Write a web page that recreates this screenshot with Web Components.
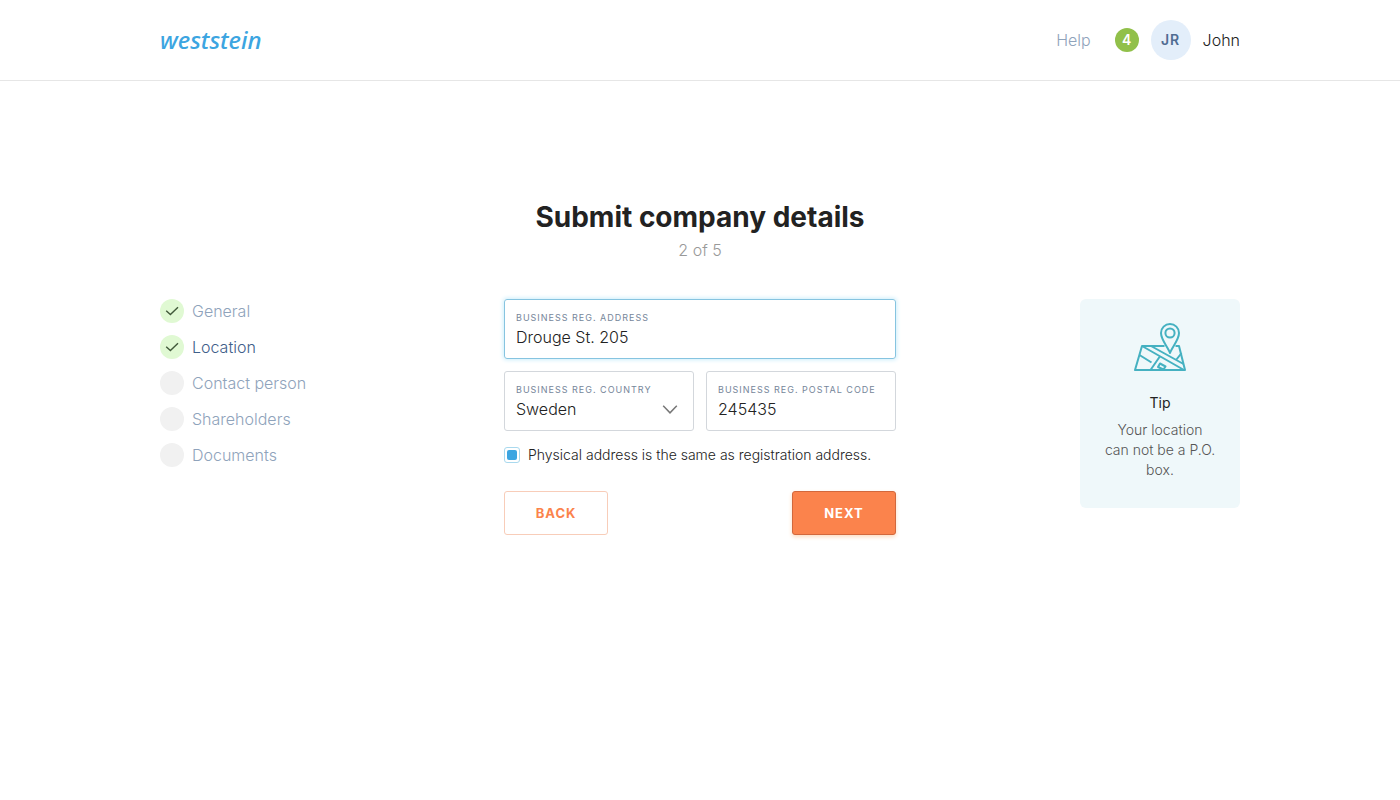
<!DOCTYPE html>
<html lang="en">
<head>
<meta charset="utf-8">
<meta name="viewport" content="width=device-width, initial-scale=1">
<title>Weststein – Submit company details</title>
<style>
  body {
    margin: 0;
    background: #fff;
    color: #222;
    font: 300 16px/24px Inter, "Open Sans", sans-serif;
    --blue: #3ca5e1;
    --muted: #8fa3bb;
    --navy: #3f608a;
    --orange: #fb834c;
  }
</style>
</head>
<body>
<company-page></company-page>

<script>
const define = (name, html, setup) => {
  const template = document.createElement('template');
  template.innerHTML = html;
  customElements.define(name, class extends HTMLElement {
    constructor() {
      super();
      this.attachShadow({ mode: 'open' }).append(template.content.cloneNode(true));
    }
    connectedCallback() {
      if (setup) setup(this, this.shadowRoot);
    }
  });
};

define('site-header', `
  <style>
    :host { display: block; border-bottom: 1px solid #e6e6e6; }
    header {
      max-width: 1080px; height: 80px; margin: 0 auto; padding: 0 16px;
      display: flex; align-items: center; justify-content: space-between;
    }
    a { text-decoration: none; }
    .logo { color: var(--blue); font: italic 500 24px/32px "Noto Sans", sans-serif; }
    nav { display: flex; align-items: center; gap: 12px; }
    .help { color: var(--muted); margin-right: 12px; }
    .count, .avatar {
      display: grid; place-items: center; border-radius: 50%;
      font-size: 14px; font-weight: 600;
    }
    .count { width: 24px; height: 24px; background: #91c04a; color: #fff; }
    .avatar { width: 40px; height: 40px; background: #e3eefa; color: #506c92; letter-spacing: 1px; }
    .name { color: #222; }
  </style>
  <header>
    <a class="logo" href="#">weststein</a>
    <nav>
      <a class="help" href="#">Help</a>
      <span class="count">4</span>
      <span class="avatar">JR</span>
      <a class="name" href="#">John</a>
    </nav>
  </header>
`);

define('step-item', `
  <style>
    :host { display: flex; align-items: center; gap: 8px; color: var(--muted); }
    :host([current]) { color: var(--navy); }
    .dot { width: 24px; height: 24px; border-radius: 50%; background: #f1f1f1; }
    :host([done]) .dot { background: #e0f9d3; }
    svg { display: none; fill: none; stroke: #41593a; stroke-width: 1.4; }
    :host([done]) svg { display: block; }
    a { color: inherit; text-decoration: none; }
  </style>
  <span class="dot"><svg width="24" height="24" viewBox="0 0 24 24"><path d="M6.2 11.8 10.4 15.6 18 8.3"/></svg></span>
  <a href="#"><slot></slot></a>
`);

define('step-list', `
  <style>
    :host { display: block; }
    nav { display: grid; gap: 12px; }
  </style>
  <nav aria-label="Steps"><slot></slot></nav>
`);

const fieldStyle = `
  :host {
    display: block; box-sizing: border-box; min-width: 0; padding: 10px 11px;
    border: 1px solid #d3d7dc; border-radius: 3px;
  }
  :host([active]) { border-color: #86c4e0; box-shadow: 0 0 4px 1px #cdeefb; }
  label {
    display: block; color: #76869a; font-size: 9px; line-height: 16px;
    font-weight: 400; letter-spacing: 1px; text-transform: uppercase;
  }
  input, select {
    display: block; box-sizing: border-box; width: 100%; height: 22px; margin: 0; padding: 0;
    border: 0; outline: 0; background: none; appearance: none;
    color: #222; font: inherit; line-height: 22px;
  }
`;

define('text-field', `
  <style>${fieldStyle}</style>
  <label for="control"></label>
  <input id="control" type="text">
`, (host, root) => {
  root.querySelector('label').textContent = host.getAttribute('label');
  root.querySelector('input').value = host.getAttribute('value');
});

define('select-field', `
  <style>
    ${fieldStyle}
    .box { display: grid; align-items: center; }
    select, svg { grid-area: 1 / 1; }
    svg { justify-self: end; margin-right: 4px; pointer-events: none; fill: none; stroke: #777; stroke-width: 1.5; }
  </style>
  <label for="control"></label>
  <div class="box">
    <select id="control"></select>
    <svg width="16" height="10" viewBox="0 0 16 10"><path d="M1.2 1.8 8 8.8 14.8 1.8"/></svg>
  </div>
`, (host, root) => {
  root.querySelector('label').textContent = host.getAttribute('label');
  root.querySelector('select').replaceChildren(
    ...host.getAttribute('options').split(',').map(text => new Option(text)));
});

define('check-field', `
  <style>
    :host { display: block; }
    label { display: flex; align-items: center; gap: 8px; font-size: 14px; line-height: 24px; }
    input {
      appearance: none; flex: none; box-sizing: border-box; width: 16px; height: 16px;
      margin: 0; padding: 2px; border: 1px solid #a9d9ee; border-radius: 3px;
      display: grid;
    }
    input:checked::before { content: ""; background: var(--blue); border-radius: 2px; }
  </style>
  <label><input type="checkbox" checked><span><slot></slot></span></label>
`);

define('action-button', `
  <style>
    :host { display: block; width: 104px; }
    button {
      width: 100%; height: 44px; padding: 0; border: 1px solid #f8cdb9; border-radius: 3px;
      background: #fff; color: var(--orange); cursor: pointer;
      font: inherit; font-size: 13px; font-weight: 700; letter-spacing: 1px;
    }
    :host([primary]) button {
      background: var(--orange); border-color: #d2683c; color: #fff;
      box-shadow: 0 2px 4px #fddcc0;
    }
  </style>
  <button type="button"><slot></slot></button>
`);

define('tip-card', `
  <style>
    :host {
      display: block; box-sizing: border-box; width: 160px; padding: 24px 20px 28px;
      border-radius: 6px; background: #eff8fa; text-align: center;
      color: #555; font-size: 14px; line-height: 20px;
    }
    svg { display: block; margin: 0 auto 20px; fill: none; stroke: #45b1c1; stroke-width: 2; stroke-linejoin: round; }
    h2 { margin: 0 0 5px; font-size: 14px; line-height: 24px; font-weight: 400; color: #222; }
    p { margin: 0; }
  </style>
  <svg width="52" height="48" viewBox="0 0 52 48" aria-hidden="true">
    <path d="M30.5 23H8L1 47H51L45 23H41.5"/>
    <path d="M36 30C34 24 27 17 27 10A9 9 0 0 1 45 10C45 17 38 24 36 30Z"/>
    <circle cx="36" cy="10" r="4.6"/>
    <path d="M8 23 50 47M17 23 49.5 41M5.5 32 17.5 39.5M25.5 34 16.5 47M42.5 36.5 47.5 30M26 40.5 31.5 43.5 29.5 46.5 24 44Z"/>
  </svg>
  <h2>Tip</h2>
  <p><slot></slot></p>
`);

define('company-form', `
  <style>
    :host { display: block; }
    form { display: grid; gap: 12px; }
    .pair { display: grid; grid-template-columns: 1fr 1fr; gap: 12px; }
    .actions { display: flex; justify-content: space-between; margin-top: 12px; }
  </style>
  <form>
    <text-field label="Business reg. address" value="Drouge St. 205" active></text-field>
    <div class="pair">
      <select-field label="Business reg. country" options="Sweden,Norway,Denmark"></select-field>
      <text-field label="Business reg. postal code" value="245435"></text-field>
    </div>
    <check-field>Physical address is the same as registration address.</check-field>
    <div class="actions">
      <action-button>BACK</action-button>
      <action-button primary>NEXT</action-button>
    </div>
  </form>
`);

define('company-page', `
  <style>
    :host { display: block; }
    main { max-width: 1080px; margin: 0 auto; padding: 116px 16px 48px; }
    .title { text-align: center; margin-bottom: 36px; }
    h1 { margin: 0; font-size: 28px; line-height: 40px; font-weight: 700; }
    .title p { margin: 0; line-height: 26px; color: #999; }
    .columns {
      display: grid; grid-template-columns: 1fr minmax(0, 392px) 1fr; align-items: start;
    }
    tip-card { justify-self: end; }
  </style>
  <site-header></site-header>
  <main>
    <div class="title">
      <h1>Submit company details</h1>
      <p>2 of 5</p>
    </div>
    <div class="columns">
      <step-list>
        <step-item done>General</step-item>
        <step-item done current>Location</step-item>
        <step-item>Contact person</step-item>
        <step-item>Shareholders</step-item>
        <step-item>Documents</step-item>
      </step-list>
      <company-form></company-form>
      <tip-card>Your location<br>can not be a P.O.<br>box.</tip-card>
    </div>
  </main>
`);
</script>
</body>
</html>
